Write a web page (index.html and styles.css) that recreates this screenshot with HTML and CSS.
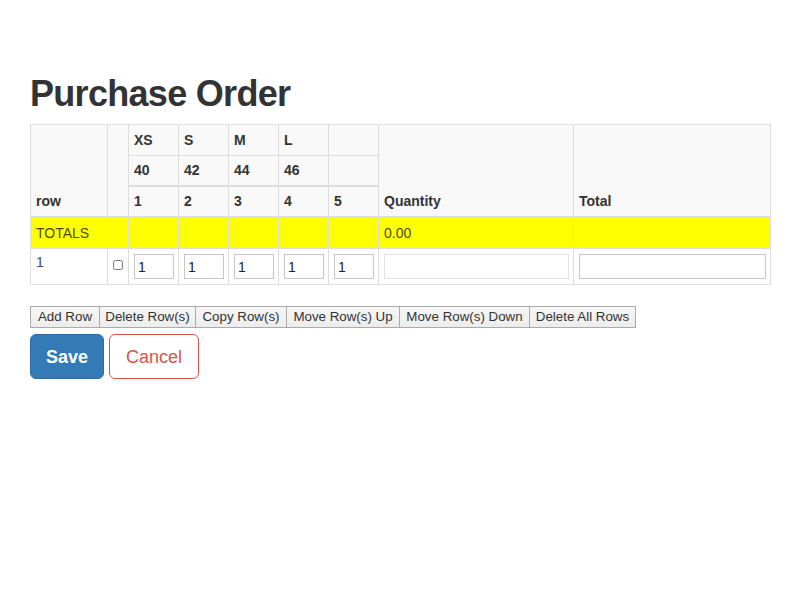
FILE: index.html
```html
<!DOCTYPE html>
<html>
<head>
<meta charset="utf-8">
<link rel="stylesheet" href="styles.css">
</head>
<body>
<div class="page">
  <h1 class="title">Purchase Order</h1>
  <table class="grid">
    <colgroup>
      <col class="c-row"><col class="c-chk"><col class="c-size"><col class="c-size"><col class="c-size"><col class="c-size"><col class="c-size"><col class="c-qty"><col class="c-total">
    </colgroup>
    <thead>
      <tr class="h1r">
        <th rowspan="3" class="tall">row</th>
        <th rowspan="3" class="tall"></th>
        <th>XS</th><th>S</th><th>M</th><th>L</th><th></th>
        <th rowspan="3" class="tall">Quantity</th>
        <th rowspan="3" class="tall">Total</th>
      </tr>
      <tr class="h2r">
        <th>40</th><th>42</th><th>44</th><th>46</th><th></th>
      </tr>
      <tr class="h3r">
        <th>1</th><th>2</th><th>3</th><th>4</th><th>5</th>
      </tr>
    </thead>
    <tbody>
      <tr class="totals">
        <td>TOTALS</td><td></td><td></td><td></td><td></td><td></td><td></td><td>0.00</td><td></td>
      </tr>
      <tr class="data">
        <td><a class="rowlink" href="#">1</a></td>
        <td><input type="checkbox" class="chk"></td>
        <td><input class="num" type="text" value="1"></td>
        <td><input class="num" type="text" value="1"></td>
        <td><input class="num" type="text" value="1"></td>
        <td><input class="num" type="text" value="1"></td>
        <td><input class="num" type="text" value="1"></td>
        <td><input class="wide ro" type="text" readonly></td>
        <td><input class="wide" type="text"></td>
      </tr>
    </tbody>
  </table>
  <div class="toolbar">
    <button class="tb w-add">Add Row</button>
    <button class="tb w-del">Delete Row(s)</button>
    <button class="tb w-copy">Copy Row(s)</button>
    <button class="tb w-up">Move Row(s) Up</button>
    <button class="tb w-down">Move Row(s) Down</button>
    <button class="tb w-all">Delete All Rows</button>
  </div>
  <div class="actions">
    <button class="btn save">Save</button>
    <button class="btn cancel">Cancel</button>
  </div>
</div>
</body>
</html>
```
FILE: styles.css
```css
html, body {
  margin: 0;
  padding: 0;
  background: #fff;
}
body {
  font-family: "Liberation Sans", Arial, sans-serif;
  font-size: 14px;
  line-height: 20px;
  color: #333;
}
.page {
  padding: 74px 30px 0 30px;
}
.title {
  margin: 0 0 10px 0;
  font-size: 36px;
  line-height: 40px;
  font-weight: bold;
  color: #333;
  letter-spacing: -0.7px;
}
.grid {
  width: 740px;
  table-layout: fixed;
  border-collapse: collapse;
  margin-bottom: 21px;
}
.c-row { width: 77px; }
.c-chk { width: 21px; }
.c-size { width: 50px; }
.c-qty { width: 195px; }
.c-total { width: 197px; }
.grid th, .grid td {
  border: 1px solid #ddd;
  padding: 5px;
  text-align: left;
  vertical-align: top;
}
.grid th {
  background: #f9f9f9;
  font-weight: bold;
}
.grid th.tall {
  vertical-align: bottom;
  border-bottom-width: 2px;
}
.h2r th, .h3r th {
  border-bottom-width: 2px;
  line-height: 19px;
}
.totals td {
  background: #ffff00;
  color: #4a4a20;
  height: 20px;
}
.data td {
  padding: 5px 4px 5px 5px;
  vertical-align: middle;
}
.rowlink {
  color: #4a3b96;
  text-decoration: none;
  position: relative;
  top: -5px;
}
.chk {
  margin: 0;
  width: 10px;
  height: 10px;
  position: relative;
  top: -2px;
}
.num {
  box-sizing: border-box;
  width: 40px;
  height: 25px;
  border: 1px solid #c6c6c6;
  padding: 1px 3px;
  font-family: "Liberation Sans", Arial, sans-serif;
  font-size: 14px;
  color: #222;
  display: block;
}
.wide {
  box-sizing: border-box;
  width: 100%;
  height: 25px;
  border: 1px solid #c6c6c6;
  display: block;
  padding: 1px 3px;
}
.wide.ro {
  border-color: #e3e3e3;
}
.toolbar {
  display: flex;
}
.tb {
  box-sizing: border-box;
  font-family: "Liberation Sans", Arial, sans-serif;
  font-size: 13.33px;
  line-height: 18px;
  height: 22px;
  padding: 0;
  margin: 0 0 6px 0;
  background: linear-gradient(#f6f6f6, #ececec);
  border: 1px solid #aaa;
  color: #333;
  text-align: center;
}
.tb + .tb {
  border-left: 0;
}
.w-add { width: 70px; }
.w-del { width: 96px; }
.w-copy { width: 91px; }
.w-up { width: 113px; }
.w-down { width: 130px; }
.w-all { width: 106px; }
.actions {
  display: flex;
  gap: 5px;
}
.btn {
  font-family: "Liberation Sans", Arial, sans-serif;
  font-size: 18px;
  line-height: 24px;
  border-radius: 6px;
  height: 45px;
  box-sizing: border-box;
}
.save {
  background: #337ab7;
  border: 1px solid #2e6da4;
  color: #fff;
  font-weight: bold;
  padding: 10px 15px;
}
.cancel {
  background: #fff;
  border: 1px solid #d9534f;
  color: #d9534f;
  padding: 10px 16px;
}
```
